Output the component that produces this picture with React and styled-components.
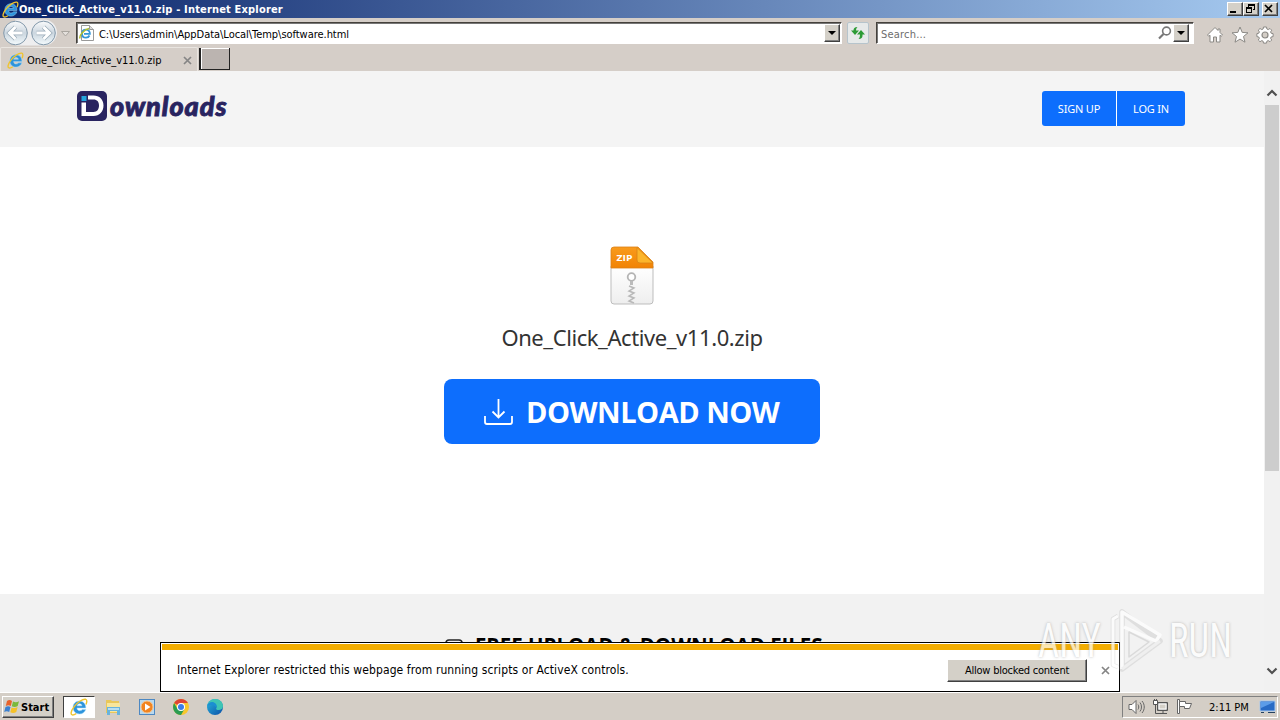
import styled, { createGlobalStyle, css } from "styled-components";

const GlobalStyle = createGlobalStyle`
  * {
    box-sizing: border-box;
  }

  body {
    margin: 0;
    overflow: hidden;
  }

  svg {
    display: block;
    flex-shrink: 0;
  }
`;

export default function App() {
  return (
    <Desktop>
      <GlobalStyle />
      <TitleBar>
        <IeIcon size={17} />
        <TitleText>One_Click_Active_v11.0.zip - Internet Explorer</TitleText>
        <WindowButton>
          <svg width="10" height="9">
            <path d="M1 7h6v2H1z" fill="#000" />
          </svg>
        </WindowButton>
        <WindowButton>
          <svg width="10" height="10" shapeRendering="crispEdges">
            <path d="M3 0h7v6H8V5h1V2H4v1H3zM1 3h6v6H1zM2 5v3h4V5z" fill="#000" fillRule="evenodd" />
          </svg>
        </WindowButton>
        <WindowButton $gap>
          <svg width="10" height="9">
            <path d="M1 1l7 7M8 1L1 8" stroke="#000" strokeWidth="1.7" />
          </svg>
        </WindowButton>
      </TitleBar>

      <NavBar>
        <NavButtons />
        <AddressBox>
          <PageIcon />
          <AddressText>C:\Users\admin\AppData\Local\Temp\software.html</AddressText>
          <DropButton />
        </AddressBox>
        <RefreshButton>
          <svg width="16" height="14" viewBox="0 0 16 14">
            <path d="M7.500 1C4.500 1 3.500 2.500 3.500 4.500H1L5 9l4-4.500H6C6 3 6.500 2 7.500 1z" fill="#2c9b35" />
            <path d="M8.500 13c3 0 4-1.500 4-3.500V8.500H15L11 4 7 8.500h3c0 2-.5 3.500-1.500 4.500z" fill="#2c9b35" />
          </svg>
        </RefreshButton>
        <SearchBox>
          <SearchText>Search...</SearchText>
          <svg width="14" height="14" viewBox="0 0 14 14" fill="none" stroke="#777">
            <circle cx="8.500" cy="5" r="3.900" strokeWidth="1.600" />
            <path d="M5.500 8L1 12.500" strokeWidth="2.200" />
          </svg>
          <DropButton />
        </SearchBox>
        <Tools>
          <svg width="18" height="18" viewBox="0 0 18 18">
            <path
              d="M9 1.500L1.500 9l1.300 1.300L4 9.200V16h3.500v-5h3v5H14V9.200l1.200 1.100L16.500 9 14 6.500V3h-2v1.500z"
              fill="#fff"
              stroke="#8b8985"
            />
          </svg>
          <svg width="18" height="18" viewBox="0 0 18 18">
            <path
              d="M9 1l2.200 5.400 5.800.4-4.500 3.700 1.500 5.700L9 13.100l-5 3.100 1.500-5.700L1 6.800l5.800-.4z"
              fill="#fff"
              stroke="#8b8985"
            />
          </svg>
          <svg width="18" height="18" viewBox="0 0 18 18">
            <path
              d="M7.500 1h3l.4 2 1.300.6L14 2.500 15.700 4.200l-1.100 1.700.5 1.300 2 .4v3l-2 .4-.5 1.300 1.100 1.700-1.700 1.700-1.800-1.100-1.300.6-.4 1.900h-3l-.4-1.900-1.300-.6L4 15.700 2.300 14l1.100-1.700-.6-1.300-1.900-.4v-3l1.900-.4.6-1.300-1.100-1.700L4 2.500l1.800 1.100L7.100 3z"
              fill="#fff"
              stroke="#8b8985"
            />
            <circle cx="9" cy="9" r="3" fill="#d4cec7" stroke="#8b8985" strokeWidth="1.200" />
          </svg>
        </Tools>
      </NavBar>

      <TabRow>
        <Tab>
          <IeIcon size={17} />
          <TabText>One_Click_Active_v11.0.zip</TabText>
          <CloseIcon />
        </Tab>
        <NewTab />
      </TabRow>

      <Viewport>
        <Page>
          <SiteHeader>
            <Brand>
              <svg width="30" height="30" viewBox="0 0 30 30">
                <rect width="30" height="30" rx="5" fill="#292460" />
                <path
                  d="M11 4.500h5.500c6 0 10 4 10 10s-4 10.500-10 10.500H4.500V11.500H9V21h7.500c3.500 0 5.500-2.600 5.500-6.400S20 8.500 16.500 8.500H11z"
                  fill="#fff"
                />
                <path d="M4.500 5h5v5h-5z" fill="#24a5dc" />
              </svg>
              <BrandName>ownloads</BrandName>
            </Brand>
            <AuthButtons>
              <AuthButton $width={74}>SIGN UP</AuthButton>
              <AuthButton $width={68}>LOG IN</AuthButton>
            </AuthButtons>
          </SiteHeader>
          <Hero>
            <ZipIcon />
            <FileName>One_Click_Active_v11.0.zip</FileName>
            <DownloadButton>
              <svg width="29" height="26" viewBox="0 0 29 26" fill="none" stroke="#fff" strokeWidth="1.800">
                <path d="M1 17v6c0 1.200.7 2 2 2h23c1.300 0 2-.8 2-2v-6" />
                <path d="M14.500 0v18M8.500 12.500l6 6 6-6" />
              </svg>
              <span>DOWNLOAD NOW</span>
            </DownloadButton>
          </Hero>
          <Features>
            <svg width="18" height="18" viewBox="0 0 18 18" fill="none" stroke="#222" strokeWidth="1.500">
              <rect x="1" y="1" width="16" height="16" rx="3" />
            </svg>
            <FeaturesTitle>FREE UPLOAD &amp; DOWNLOAD FILES</FeaturesTitle>
          </Features>
        </Page>
        <Scrollbar>
          <svg width="12" height="8" viewBox="0 0 12 8">
            <path d="M1.500 6.500L6 2l4.500 4.500" fill="none" stroke="#505050" strokeWidth="2.200" />
          </svg>
          <Thumb />
          <svg width="12" height="8" viewBox="0 0 12 8">
            <path d="M1.500 1.500L6 6l4.500-4.500" fill="none" stroke="#505050" strokeWidth="2.200" />
          </svg>
        </Scrollbar>
        <Notice>
          <NoticeStripe />
          <NoticeBody>
            <NoticeText>
              Internet Explorer restricted this webpage from running scripts or ActiveX controls.
            </NoticeText>
            <AllowButton>Allow blocked content</AllowButton>
            <CloseIcon />
          </NoticeBody>
        </Notice>
        <Watermark>
          <MarkText>ANY</MarkText>
          <svg width="58" height="66" viewBox="0 0 58 66" fill="none" strokeLinejoin="round">
            <path d="M11 8l-5 3v46l5 2" stroke="#bbb" strokeWidth="4.500" strokeOpacity=".5" />
            <path d="M11 8l-5 3v46l5 2" stroke="#fff" strokeWidth="3" />
            <path d="M15 4v57l38-28z" stroke="#bbb" strokeWidth="5.500" strokeOpacity=".5" />
            <path d="M15 61V4l38 23-4 6-32-14" stroke="#fff" strokeWidth="3.500" />
            <path d="M15 61l38-28" stroke="#eee" strokeWidth="3" />
            <path d="M22 24v25l20-15z" stroke="#d0d0d0" strokeWidth="1.500" />
          </svg>
          <MarkText>RUN</MarkText>
        </Watermark>
      </Viewport>

      <Taskbar>
        <StartButton>
          <svg width="17" height="16" viewBox="0 0 17 16">
            <path d="M3 2c2-1.500 3.500-1 5 0L6.800 7c-1.600-1-3.200-1-5 0z" fill="#e8632b" />
            <path d="M9 2.500c2 1 4 1 6-.3L13.700 7c-2 1.300-4 1.200-5.900.3z" fill="#7bb93c" />
            <path d="M1.500 8c1.800-1 3.500-1 5 0l-1.300 5c-1.600-1-3.300-1-5 0z" fill="#3b80d0" />
            <path d="M7.600 8.400c2 1 4 1 6-.3l-1.300 4.800c-2 1.300-4 1.200-6 .3z" fill="#f5c128" />
          </svg>
          <span>Start</span>
        </StartButton>
        <TaskButton $active>
          <IeIcon size={18} />
        </TaskButton>
        <TaskButton>
          <svg width="18" height="18" viewBox="0 0 18 18">
            <path d="M2 2h5l1 1h7v12H2z" fill="#e9c75a" />
            <path d="M3 5h13v9H3z" fill="#f8e69b" />
            <path d="M3 9h13v8h-3v-4H6v4H3z" fill="#69b3dc" />
            <path d="M4 10h11v2H4z" fill="#b7def0" />
          </svg>
        </TaskButton>
        <TaskButton>
          <svg width="18" height="18" viewBox="0 0 18 18">
            <rect x="1.500" y="1.500" width="15" height="15" fill="#b9d9ee" stroke="#4d88c2" />
            <circle cx="9" cy="9" r="6" fill="#f18420" stroke="#f9c38a" />
            <path d="M7 5.500v7L12.500 9z" fill="#fff" />
          </svg>
        </TaskButton>
        <TaskButton>
          <svg width="18" height="18" viewBox="0 0 18 18">
            <circle cx="9" cy="9" r="8" fill="#f8c72c" />
            <path d="M9 9L2.100 5A8 8 0 0 1 15.900 5H9z" fill="#dd4435" />
            <path d="M2.100 5A8 8 0 0 0 9 17l3.500-6L5.500 11z" fill="#2b9c52" />
            <circle cx="9" cy="9" r="4" fill="#fff" />
            <circle cx="9" cy="9" r="3" fill="#3b7de8" />
          </svg>
        </TaskButton>
        <TaskButton>
          <svg width="18" height="18" viewBox="0 0 18 18">
            <defs>
              <linearGradient id="edge" x1="0" y1="0" x2="1" y2="1">
                <stop offset="0" stopColor="#29b5dd" />
                <stop offset="1" stopColor="#0c50a8" />
              </linearGradient>
            </defs>
            <circle cx="9" cy="9" r="8" fill="url(#edge)" />
            <path d="M1.500 7C3 2 7 1 9 1c5 0 8 3.500 8 7 0 2.500-2 4-4.300 4-2 0-3-.7-2.500-1.500C11.500 8 9 5.500 6 5.500 4 5.500 2.500 6 1.500 7z" fill="#3fc5b4" />
            <path d="M1.200 8C2 4 6 3.500 8 4.500c2.500 1 3.500 3.500 2.500 5.500C9 7 4 6 1.200 8z" fill="#1b8fd2" />
          </svg>
        </TaskButton>
        <Tray>
          <svg width="18" height="16" viewBox="0 0 18 16" fill="none" stroke="#666">
            <path d="M1 5.500h3l4-4v13l-4-4H1z" fill="#fff" />
            <path d="M10 5.500c1 1.500 1 3.500 0 5M12 3.500c2 2.500 2 6.500 0 9M14 2c3 3.500 3 8.500 0 12" />
          </svg>
          <svg width="18" height="16" viewBox="0 0 18 16" stroke="#555">
            <path d="M5.500 3.500h10v8h-10z" fill="#aaa" />
            <path d="M7 5h7v5H7z" fill="#d4d0c8" stroke="#fff" />
            <path d="M7 14.500h8M11 12v2M3.500 6v8.500H7" fill="none" />
            <path d="M1.500 1.500h4v4h-4zM2.500 0v2M4.500 0v2" fill="#fff" />
          </svg>
          <svg width="18" height="16" viewBox="0 0 18 16" stroke="#666" fill="#fff">
            <path d="M1.500.5h2v14h-2z" />
            <path d="M3.500 2.500h6v2h6l-2 5h-5v-2h-5z" />
          </svg>
          <Clock>2:11 PM</Clock>
          <svg width="17" height="16" viewBox="0 0 17 16">
            <path d="M1 2h15v10H1z" fill="#286bc5" stroke="#a8c9ed" />
            <path d="M2 3h13L2 9z" fill="#5b9ce8" />
            <path d="M2 13h3v1H2zM9 13h7v1H9z" fill="#24415f" />
          </svg>
        </Tray>
      </Taskbar>
    </Desktop>
  );
}

function IeIcon({ size }) {
  return (
    <svg width={size} height={size} viewBox="0 0 18 18" fill="none">
      <path
        d="M15.800 11.500c-1 2.700-3.200 4.500-6.200 4.500-4 0-6.600-2.900-6.600-6.500S5.600 3 9.400 3c4 0 6.500 2.900 6.400 7H7c.1 1.700 1.100 2.700 2.700 2.700 1.200 0 2-.4 2.500-1.200zM7.100 7.800H12c-.2-1.400-1.100-2.100-2.400-2.100S7.400 6.400 7.100 7.800z"
        fill="#2e94dc"
        stroke="#a5dcf8"
        strokeWidth=".5"
      />
      <path d="M16 6.500c1.200-3 1-4.800-.3-5.200C13 .6 7.500 4 4 8.800.8 13 .4 16.500 2.200 16.900c1 .2 2.500-.3 4-1.300" stroke="#efc42d" strokeWidth="1.400" />
    </svg>
  );
}

function PageIcon() {
  return (
    <svg width="16" height="16" viewBox="0 0 16 16">
      <path d="M2.500.5h8l4 4v11h-12z" fill="#fff" stroke="#999" />
      <path d="M10.500.5v4h4" fill="#ddd" stroke="#999" />
      <path d="M10.500 10.500c-.7 1.500-1.800 2.200-3.500 2.200-2.500 0-4-1.700-4-4s1.500-4 4-4 4 1.700 3.900 4.200H5" fill="none" stroke="#3597d8" strokeWidth="1.800" />
      <path d="M1 13.500C0 10.500 5 4.500 10 3.500" fill="none" stroke="#b2bd2d" strokeWidth="1.500" />
    </svg>
  );
}

function NavButtons() {
  return (
    <svg width="76" height="28" viewBox="0 0 76 28">
      <defs>
        <linearGradient id="orb" x1="0" y1="0" x2="0" y2="1">
          <stop offset="0" stopColor="#fafbfc" />
          <stop offset=".5" stopColor="#cbd6df" />
          <stop offset="1" stopColor="#f3fafc" />
        </linearGradient>
      </defs>
      <path d="M15 1.500h29a13 13 0 0 1 0 26H15z" fill="#eeeeef" />
      <circle cx="15.500" cy="15" r="11.800" fill="url(#orb)" stroke="#8298aa" />
      <circle cx="43.500" cy="15" r="11.800" fill="url(#orb)" stroke="#8298aa" />
      <path d="M22.500 15H10M15.500 9l-6 6 6 6" fill="none" stroke="#9aabb8" strokeWidth="4.500" />
      <path d="M22.500 15H10M15.500 9l-6 6 6 6" fill="none" stroke="#fff" strokeWidth="3" />
      <path d="M36.500 15H49M43.500 9l6 6-6 6" fill="none" stroke="#9aabb8" strokeWidth="4.500" />
      <path d="M36.500 15H49M43.500 9l6 6-6 6" fill="none" stroke="#fff" strokeWidth="3" />
      <path d="M61.500 13.500h8l-4 4.500z" fill="#e4e0dc" stroke="#aaa6a0" />
    </svg>
  );
}

function CloseIcon() {
  return (
    <svg width="9" height="9" viewBox="0 0 9 9">
      <path d="M1 1l7 7M8 1L1 8" stroke="#858585" strokeWidth="1.700" />
    </svg>
  );
}

function ZipIcon() {
  return (
    <svg width="44" height="59" viewBox="0 0 44 59">
      <defs>
        <linearGradient id="paper" x1="0" y1="0" x2="0" y2="1">
          <stop offset="0" stopColor="#fff" />
          <stop offset="1" stopColor="#eee" />
        </linearGradient>
        <linearGradient id="orange" x1="0" y1="0" x2="0" y2="1">
          <stop offset="0" stopColor="#f99b1c" />
          <stop offset="1" stopColor="#f18305" />
        </linearGradient>
      </defs>
      <path d="M1 20h42v35a3 3 0 0 1-3 3H4a3 3 0 0 1-3-3z" fill="url(#paper)" stroke="#bdbdbd" />
      <path d="M1 22V4a3 3 0 0 1 3-3h24l15 15v6z" fill="url(#orange)" stroke="#dc8216" strokeWidth=".8" />
      <path d="M27 1.500L43 17H30a3 3 0 0 1-3-3z" fill="#fcb52b" stroke="#d88418" strokeWidth=".8" />
      <ZipLabel x="6.500" y="15" textLength="16" lengthAdjust="spacingAndGlyphs">
        ZIP
      </ZipLabel>
      <circle cx="21.500" cy="31" r="3.800" fill="#fff" stroke="#b4b4b4" strokeWidth="1.800" />
      <path d="M20 35h3v4h-3z" fill="#bbb" />
      <path d="M19 40l5 2-5 3 5 2-5 3 5 2-5 3 5 2" fill="none" stroke="#b9b9b9" strokeWidth="1.500" />
    </svg>
  );
}

const bevel = css`
  background: #d4d0c8;
  border: 1px solid;
  border-color: #fff #404040 #404040 #fff;
  box-shadow: inset -1px -1px 0 #808080;
`;

const Desktop = styled.div`
  width: 1280px;
  height: 720px;
  display: flex;
  flex-direction: column;
  overflow: hidden;
  background: #d4d0c8;
  color: #000;
  font-family: "DejaVu Sans Condensed", "DejaVu Sans", sans-serif;
  font-stretch: condensed;
  font-size: 11px;
  white-space: nowrap;
`;

const TitleBar = styled.div`
  height: 18px;
  padding: 0 2px;
  display: flex;
  align-items: center;
  background: linear-gradient(90deg, #0a246a, #a6caf0);
  color: #fff;
`;

const TitleText = styled.div`
  flex: 1;
  font-weight: 700;
  letter-spacing: 0.17px;
`;

const WindowButton = styled.div`
  ${bevel}
  width: 16px;
  height: 14px;
  padding: 1px 1px;
  margin-left: ${(props) => (props.$gap ? "3px" : "0")};
`;

const NavBar = styled.div`
  height: 29px;
  display: flex;
  align-items: flex-start;
  background: #d5cec8;
`;

const fieldBox = css`
  height: 22px;
  margin-top: 4px;
  display: flex;
  align-items: center;
  background: #fff;
  border: 1px solid;
  border-color: #45413c #fff #fff #45413c;
  box-shadow: inset 1px 1px 0 #777;
`;

const AddressBox = styled.div`
  ${fieldBox}
  width: 766px;
  padding: 0 1px 0 2px;
`;

const AddressText = styled.div`
  flex: 1;
  padding: 2px 0 0 4px;
  letter-spacing: -0.04px;
`;

const DropButton = styled.div`
  ${bevel}
  width: 16px;
  height: 18px;
  display: grid;
  place-items: center;

  &::after {
    content: "";
    border: 4px solid transparent;
    border-top-color: #000;
    border-bottom: 0;
  }
`;

const RefreshButton = styled.div`
  width: 22px;
  height: 22px;
  margin: 4px 7px 0 5px;
  display: grid;
  place-items: center;
  background: #e6e9e9;
  border: 1px solid #b6c4cc;
  border-radius: 2px;
`;

const SearchBox = styled.div`
  ${fieldBox}
  width: 318px;
  padding: 0 4px 0 4px;

  svg {
    margin-right: 1px;
  }
`;

const SearchText = styled.div`
  flex: 1;
  padding-top: 2px;
  color: #6d6d6d;
  letter-spacing: 0.2px;
`;

const Tools = styled.div`
  display: flex;
  gap: 7px;
  margin: 8px 0 0 12px;
`;

const TabRow = styled.div`
  height: 24px;
  display: flex;
  background: #d5cec8;
`;

const Tab = styled.div`
  width: 198px;
  padding: 1px 5px 0 6px;
  display: flex;
  align-items: center;
  border: 1px solid #e9e5e0;
  border-bottom: 0;
  border-radius: 2px 2px 0 0;
`;

const TabText = styled.div`
  flex: 1;
  padding-left: 3px;
`;

const NewTab = styled.div`
  width: 31px;
  height: 22px;
  margin: 1px 0 0 1px;
  background: #bbb4b0;
  border: 1px solid #222;
  border-width: 0 1px 1px 2px;
  box-shadow: inset 1px 1px 0 #fff;
`;

const Viewport = styled.div`
  position: relative;
  height: 621px;
  display: flex;
`;

const Page = styled.div`
  width: 1264px;
  overflow: hidden;
  display: flex;
  flex-direction: column;
  background: #fff;
  font-family: "Noto Sans", sans-serif;
  font-stretch: normal;
`;

const SiteHeader = styled.div`
  height: 76px;
  padding: 20px 79px 0 77px;
  display: flex;
  justify-content: space-between;
  align-items: flex-start;
  background: #f4f4f4;
`;

const Brand = styled.div`
  display: flex;
  align-items: center;
  gap: 3px;
`;

const BrandName = styled.div`
  color: #292460;
  font-family: Lato, sans-serif;
  font-size: 27px;
  font-style: italic;
  font-weight: 900;
  line-height: 30px;
  letter-spacing: 1px;
  -webkit-text-stroke: 0.9px #292460;
`;

const AuthButtons = styled.div`
  display: flex;
  gap: 1px;
  background: #fff;
  border-radius: 3px;
  overflow: hidden;
`;

const AuthButton = styled.div`
  width: ${(props) => props.$width}px;
  height: 35px;
  display: grid;
  place-items: center;
  background: #0d6efd;
  color: #fff;
  font-size: 11px;
  letter-spacing: -0.2px;
`;

const Hero = styled.div`
  height: 447px;
  padding-top: 98px;
  display: flex;
  flex-direction: column;
  align-items: center;

  > svg {
    margin-top: 1px;
  }
`;

const ZipLabel = styled.text`
  fill: #fff;
  font: 700 9px "Open Sans", sans-serif;
`;

const FileName = styled.div`
  margin-top: 16px;
  height: 32px;
  line-height: 32px;
  color: #333;
  font-size: 22px;
  letter-spacing: -0.42px;
`;

const DownloadButton = styled.div`
  width: 376px;
  height: 65px;
  margin-top: 26px;
  padding-left: 40px;
  display: flex;
  align-items: center;
  gap: 13px;
  background: #0d6efd;
  border-radius: 8px;
  color: #fff;
  font-family: "Open Sans", sans-serif;
  font-size: 29px;
  font-weight: 700;
  letter-spacing: -0.5px;

  svg {
    margin-top: 1px;
  }
`;

const Features = styled.div`
  height: 98px;
  padding: 45px 0 0 445px;
  display: flex;
  align-items: flex-start;
  gap: 12px;
  background: #f2f2f2;
`;

const FeaturesTitle = styled.div`
  margin-top: -6px;
  color: #000;
  font-family: "Open Sans", sans-serif;
  font-size: 20.5px;
  font-weight: 700;
  line-height: 24px;
`;

const Scrollbar = styled.div`
  width: 16px;
  padding: 18px 1px 17px;
  display: flex;
  flex-direction: column;
  align-items: center;
  background: #f1f1f1;

  svg:last-child {
    margin-top: auto;
  }
`;

const Thumb = styled.div`
  width: 14px;
  height: 366px;
  margin-top: 8px;
  background: #cdcdcd;
`;

const Notice = styled.div`
  position: absolute;
  left: 160px;
  bottom: 0;
  width: 960px;
  height: 50px;
  padding: 1px;
  background: #fff;
  border: 1px solid #000;
`;

const NoticeStripe = styled.div`
  height: 6px;
  background: #f3ad00;
`;

const NoticeBody = styled.div`
  height: 40px;
  padding: 0 8px 0 15px;
  display: flex;
  align-items: center;
`;

const NoticeText = styled.div`
  flex: 1;
  font-size: 12px;
  letter-spacing: 0.1px;
`;

const AllowButton = styled.div`
  ${bevel}
  width: 140px;
  height: 23px;
  margin-right: 14px;
  line-height: 22px;
  text-align: center;
  letter-spacing: -0.22px;
`;

const Watermark = styled.div`
  position: absolute;
  left: 1038px;
  top: 537px;
  width: 196px;
  height: 66px;
  display: flex;
  align-items: center;
  justify-content: space-between;
  opacity: 0.7;
`;

const MarkText = styled.div`
  width: 65px;
  color: #fff;
  font-family: Roboto, sans-serif;
  font-size: 49px;
  font-weight: 400;
  line-height: 36px;
  text-shadow: 0 0 3px #999;
  transform: scaleX(0.75);
  transform-origin: left;
`;

const Taskbar = styled.div`
  height: 28px;
  padding: 3px 2px 2px;
  display: flex;
  background: #d4cec6;
  border-top: 1px solid #fff;
`;

const StartButton = styled.div`
  ${bevel}
  width: 52px;
  height: 22px;
  padding-left: 1px;
  display: flex;
  align-items: center;
  font-weight: 700;
`;

const TaskButton = styled.div`
  width: 34px;
  height: 22px;
  display: grid;
  place-items: center;

  ${(props) =>
    props.$active &&
    css`
      width: 32px;
      margin: 0 1px 0 9px;
      background: #fff;
      border: 1px solid;
      border-color: #404040 #fff #fff #404040;
    `}
`;

const Tray = styled.div`
  width: 156px;
  height: 22px;
  margin-left: auto;
  padding: 0 1px 0 5px;
  display: flex;
  align-items: center;
  gap: 6px;
  border: 1px solid;
  border-color: #808080 #fff #fff #808080;
`;

const Clock = styled.div`
  flex: 1;
  padding-left: 9px;
`;
